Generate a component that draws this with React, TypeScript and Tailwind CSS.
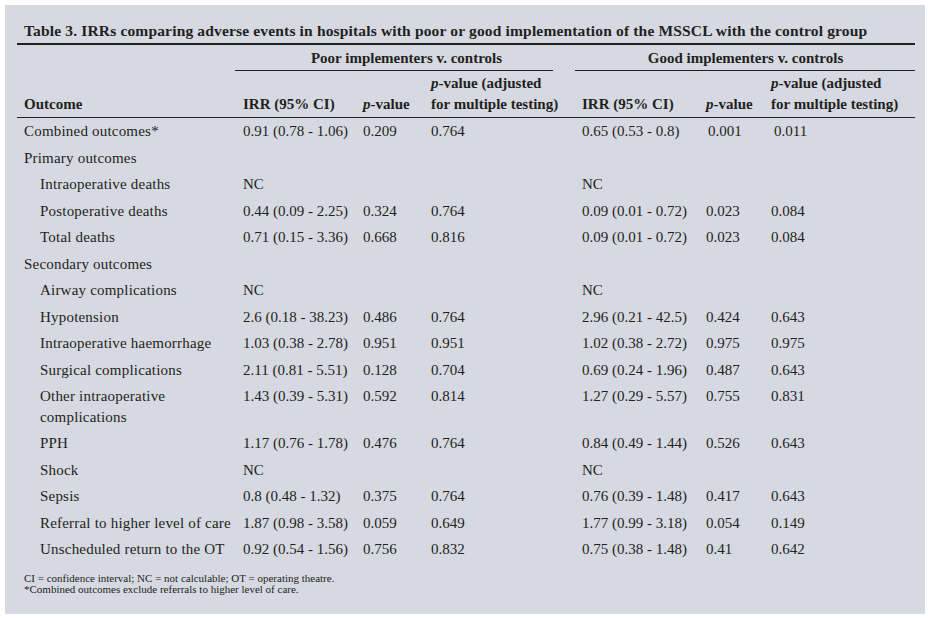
import React from 'react';

type Row = {
  label: React.ReactNode;
  key: string;
  indent?: boolean;
  poor?: [string, string?, string?];
  good?: [string, string?, string?];
  shift?: boolean;
};

const ROWS: Row[] = [
  { key: 'c', label: 'Combined outcomes*', poor: ['0.91 (0.78 - 1.06)', '0.209', '0.764'], good: ['0.65 (0.53 - 0.8)', '0.001', '0.011'], shift: true },
  { key: 'p', label: 'Primary outcomes' },
  { key: 'id', label: 'Intraoperative deaths', indent: true, poor: ['NC'], good: ['NC'] },
  { key: 'pd', label: 'Postoperative deaths', indent: true, poor: ['0.44 (0.09 - 2.25)', '0.324', '0.764'], good: ['0.09 (0.01 - 0.72)', '0.023', '0.084'] },
  { key: 'td', label: 'Total deaths', indent: true, poor: ['0.71 (0.15 - 3.36)', '0.668', '0.816'], good: ['0.09 (0.01 - 0.72)', '0.023', '0.084'] },
  { key: 's', label: 'Secondary outcomes' },
  { key: 'ac', label: 'Airway complications', indent: true, poor: ['NC'], good: ['NC'] },
  { key: 'hy', label: 'Hypotension', indent: true, poor: ['2.6 (0.18 - 38.23)', '0.486', '0.764'], good: ['2.96 (0.21 - 42.5)', '0.424', '0.643'] },
  { key: 'ih', label: 'Intraoperative haemorrhage', indent: true, poor: ['1.03 (0.38 - 2.78)', '0.951', '0.951'], good: ['1.02 (0.38 - 2.72)', '0.975', '0.975'] },
  { key: 'sc', label: 'Surgical complications', indent: true, poor: ['2.11 (0.81 - 5.51)', '0.128', '0.704'], good: ['0.69 (0.24 - 1.96)', '0.487', '0.643'] },
  { key: 'oi', label: <>Other intraoperative<br />complications</>, indent: true, poor: ['1.43 (0.39 - 5.31)', '0.592', '0.814'], good: ['1.27 (0.29 - 5.57)', '0.755', '0.831'] },
  { key: 'pph', label: 'PPH', indent: true, poor: ['1.17 (0.76 - 1.78)', '0.476', '0.764'], good: ['0.84 (0.49 - 1.44)', '0.526', '0.643'] },
  { key: 'sh', label: 'Shock', indent: true, poor: ['NC'], good: ['NC'] },
  { key: 'se', label: 'Sepsis', indent: true, poor: ['0.8 (0.48 - 1.32)', '0.375', '0.764'], good: ['0.76 (0.39 - 1.48)', '0.417', '0.643'] },
  { key: 'rf', label: 'Referral to higher level of care', indent: true, poor: ['1.87 (0.98 - 3.58)', '0.059', '0.649'], good: ['1.77 (0.99 - 3.18)', '0.054', '0.149'] },
  { key: 'ur', label: 'Unscheduled return to the OT', indent: true, poor: ['0.92 (0.54 - 1.56)', '0.756', '0.832'], good: ['0.75 (0.38 - 1.48)', '0.41', '0.642'] },
];

const GRID = 'grid grid-cols-[220px_120px_68px_151px_124px_65px_150px]';

const PVal = () => (
  <>
    <i>p</i>-value
  </>
);

export default function App() {
  return (
    <div className="w-[928px] h-[620px] bg-white pt-[5px] pl-[5px]" style={{ fontFamily: '"Liberation Serif", "Times New Roman", serif' }}>
      <div className="w-[920px] h-[609px] bg-[#d6d9e1] pt-[16px] pl-[12px] pr-[10px] text-[#231f20]">
        <div className="text-[15.5px] leading-[20px] font-bold pl-[7px] tracking-[0.16px] whitespace-nowrap">
          Table 3. IRRs comparing adverse events in hospitals with poor or good implementation of the MSSCL with the control group
        </div>
        <div className="mt-[2px] h-[2px] bg-[#231f20]" />

        {/* group headers */}
        <div className={`${GRID} text-[15px] font-bold`}>
          <div />
          <div className="col-span-3 h-[26px] flex flex-col justify-between">
            <div className="text-center leading-[26px] h-[25px]">Poor implementers v. controls</div>
            <div className="h-px bg-[#231f20] mr-[23px] -ml-[2px]" />
          </div>
          <div className="col-span-3 h-[26px] flex flex-col justify-between">
            <div className="text-center leading-[26px] h-[25px]">Good implementers v. controls</div>
            <div className="h-px bg-[#231f20] -ml-px" />
          </div>
        </div>

        {/* sub headers */}
        <div className={`${GRID} text-[15px] font-bold leading-[21px] pt-[2px] pb-[2px] border-b border-[#231f20] whitespace-nowrap`}>
          <div className="pl-[7px] self-end">Outcome</div>
          <div className="pl-[6px] self-end">IRR (95% CI)</div>
          <div className="pl-[6px] self-end"><PVal /></div>
          <div className="pl-[6px]"><PVal /> (adjusted<br />for multiple testing)</div>
          <div className="pl-[6px] self-end">IRR (95% CI)</div>
          <div className="pl-[6px] self-end"><PVal /></div>
          <div className="pl-[6px]"><PVal /> (adjusted<br />for multiple testing)</div>
        </div>

        {/* body */}
        <div className="text-[15px] leading-[20.5px] whitespace-nowrap">
          {ROWS.map((r) => (
            <div key={r.key} className={`${GRID} py-[3px]`}>
              <div className={`tracking-[0.2px] ${r.indent ? 'pl-[23px]' : 'pl-[7px]'}`}>{r.label}</div>
              <div className="pl-[6px]">{r.poor?.[0]}</div>
              <div className="pl-[6px]">{r.poor?.[1]}</div>
              <div className="pl-[6px]">{r.poor?.[2]}</div>
              <div className="pl-[6px]">{r.good?.[0]}</div>
              <div className={r.shift ? 'pl-[8px]' : 'pl-[6px]'}>{r.good?.[1]}</div>
              <div className={r.shift ? 'pl-[9px]' : 'pl-[6px]'}>{r.good?.[2]}</div>
            </div>
          ))}
        </div>

        <div className="mt-[10px] pl-[7px] text-[11px] leading-[11px]">
          <div>CI = confidence interval; NC = not calculable; OT = operating theatre.</div>
          <div>*Combined outcomes exclude referrals to higher level of care.</div>
        </div>
      </div>
    </div>
  );
}
